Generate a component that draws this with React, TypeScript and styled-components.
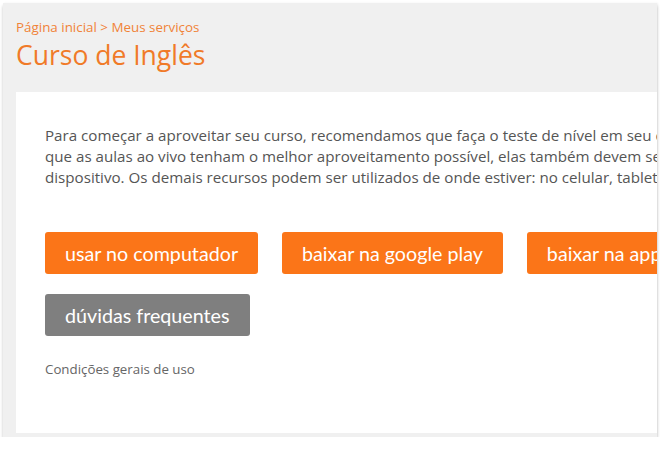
import React from 'react';
import styled, { createGlobalStyle } from 'styled-components';

const GlobalStyle = createGlobalStyle`
    html, body {
        margin: 0;
        padding: 0;
        background: #ffffff;
    }
    body {
        font-family: "Open Sans", "Liberation Sans", sans-serif;
    }
`;

const Frame = styled.div`
    margin: 3px 0 0 3px;
    width: 654px;
    height: 434px;
    background: #f0f0f0;
    box-shadow: 0 3px 3px rgba(0,0,0,0.22), 1px 0 2px rgba(0,0,0,0.06);
    overflow: hidden;
    display: flex;
    flex-direction: column;
`;

const Header = styled.div`
    padding: 15px 13px 0;
    height: 74px;
    box-sizing: border-box;
`;

const Breadcrumb = styled.div`
    color: #f08338;
    font-size: 13.4px;
    line-height: 18px;
`;

const Title = styled.h1`
    margin: 2px 0 0;
    color: #f07a28;
    font-size: 26.5px;
    font-weight: 400;
    line-height: 34px;
`;

const Card = styled.div`
    margin: 15px 0 4px 13px;
    flex: 1;
    background: #ffffff;
    padding: 33px 0 0 29px;
`;

const Intro = styled.p`
    margin: 0;
    color: #555555;
    font-size: 15.15px;
    line-height: 21px;
    white-space: nowrap;
`;

const Actions = styled.div`
    margin-top: 44px;
    display: flex;
    flex-direction: column;
    gap: 20px;
`;

const ButtonRow = styled.div`
    display: flex;
    gap: 24px;
`;

const Button = styled.button<{ $tone: 'orange' | 'grey' }>`
    height: 42px;
    padding: 0 20px;
    border: none;
    border-radius: 3px;
    background: ${p => (p.$tone === 'orange' ? '#fb7518' : '#7f7f7f')};
    color: #ffffff;
    font-family: Lato, "Noto Sans", sans-serif;
    font-size: 19.7px;
    cursor: pointer;
    white-space: nowrap;
    flex-shrink: 0;
`;

const Terms = styled.div`
    margin-top: 24px;
    color: #666666;
    font-size: 13.3px;
`;

export default function App() {
    return <>
        <GlobalStyle />
        <Frame>
            <Header>
                <Breadcrumb>Página inicial &gt; Meus serviços</Breadcrumb>
                <Title>Curso de Inglês</Title>
            </Header>
            <Card>
                <Intro>
                    Para começar a aproveitar seu curso, recomendamos que faça o teste de nível em seu computador. Para<br />
                    que as aulas ao vivo tenham o melhor aproveitamento possível, elas também devem ser acessadas pelo<br />
                    dispositivo. Os demais recursos podem ser utilizados de onde estiver: no celular, tablet ou computador.
                </Intro>
                <Actions>
                    <ButtonRow>
                        <Button $tone="orange">usar no computador</Button>
                        <Button $tone="orange">baixar na google play</Button>
                        <Button $tone="orange">baixar na app store</Button>
                    </ButtonRow>
                    <ButtonRow>
                        <Button $tone="grey">dúvidas frequentes</Button>
                    </ButtonRow>
                </Actions>
                <Terms>Condições gerais de uso</Terms>
            </Card>
        </Frame>
    </>;
}
